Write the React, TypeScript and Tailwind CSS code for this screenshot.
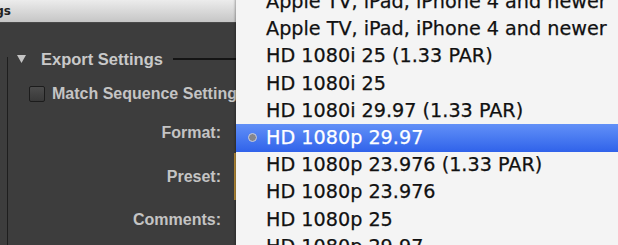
import React from "react";

const presets = [
    "Apple TV, iPad, iPhone 4 and newer",
    "Apple TV, iPad, iPhone 4 and newer",
    "HD 1080i 25 (1.33 PAR)",
    "HD 1080i 25",
    "HD 1080i 29.97 (1.33 PAR)",
    "HD 1080p 29.97",
    "HD 1080p 23.976 (1.33 PAR)",
    "HD 1080p 23.976",
    "HD 1080p 25",
    "HD 1080p 29.97",
];

const SELECTED = 5;

function TitleBar() {
    return (
        <div className="h-[23px] flex bg-gradient-to-b from-[#ececec] to-[#c6c6c6] border-b border-[#4a4a4a]">
            {/* window title, only the tail of it is on screen */}
            <div className="w-[11px] flex justify-end whitespace-nowrap font-['DejaVu_Sans',sans-serif] font-bold text-[12px] leading-[23px] text-[#222]">
                Export Settings
            </div>
        </div>
    );
}

function PresetMenu() {
    return (
        <div className="absolute left-[236px] top-[-12px] right-0 bg-[#f4f4f4] shadow-[-1px_0_2px_rgba(0,0,0,0.3)] font-['DejaVu_Sans','Lucida_Grande',sans-serif] text-[19.2px] [-webkit-text-stroke:0.25px]">
            {presets.map((p, i) => {
                const sel = i === SELECTED;
                return (
                    <div
                        key={i}
                        className={
                            sel
                                ? "relative h-[28px] -my-[0.4px] leading-[28px] pl-[30px] whitespace-nowrap text-white bg-gradient-to-b from-[#6290f7] to-[#3062ea]"
                                : "h-[27.2px] leading-[27.2px] pl-[30px] whitespace-nowrap text-[#111]"
                        }
                    >
                        {sel && (
                            <span className="absolute left-[12px] top-[9.5px] w-[9px] h-[9px] rounded-full bg-[#85868c] border border-[#c6cde6]" />
                        )}
                        {p}
                    </div>
                );
            })}
        </div>
    );
}

export default function App() {
    return (
        <div className="relative w-[618px] h-[245px] overflow-hidden bg-[#3d3d3d] font-['Liberation_Sans',Arial,sans-serif]">
            <TitleBar />

            <div className="flex mt-[26px]">
                {/* left guide line */}
                <div className="w-[7px]" />
                <div className="mt-[8px] w-px h-[200px] bg-[#1e1e1e]" />

                <div className="flex-1">
                    {/* section header */}
                    <div className="h-[20px] flex items-center">
                        <svg width="9" height="8" viewBox="0 0 9 8" className="ml-[9px]">
                            <path d="M0 0 L9 0 L4.5 8 Z" fill="#c4c4c4" />
                        </svg>
                        <span className="ml-[15px] font-bold text-[16.5px] text-[#c9c9c9] whitespace-nowrap">
                            Export Settings
                        </span>
                        <div className="ml-[10px] flex-1 h-[2px] bg-[#141414]" />
                    </div>

                    {/* match sequence */}
                    <div className="mt-[15px] h-[20px] flex items-center">
                        <div className="ml-[21px] w-[16px] h-[16px] rounded-[2px] border border-[#1c1c1c] bg-gradient-to-b from-[#4c4c4c] to-[#393939]" />
                        <span className="ml-[7px] font-bold text-[16px] text-[#c4c4c4] whitespace-nowrap">
                            Match Sequence Settings
                        </span>
                    </div>

                    {/* form rows */}
                    <div className="mt-[18px] flex flex-col gap-[21.5px]">
                        <div className="h-[22px] flex items-center">
                            <span className="w-[213px] text-right font-bold text-[16px] leading-[22px] text-[#c4c4c4]">Format:</span>
                        </div>
                        <div className="h-[22px] flex items-center">
                            <span className="w-[213px] text-right font-bold text-[16px] leading-[22px] text-[#c4c4c4]">Preset:</span>
                            <div className="ml-[13px] w-[4px] h-[47px] shrink-0 bg-[#b68c38]" />
                        </div>
                        <div className="h-[22px] flex items-center">
                            <span className="w-[213px] text-right font-bold text-[16px] leading-[22px] text-[#c4c4c4]">Comments:</span>
                        </div>
                    </div>
                </div>
            </div>

            <PresetMenu />
        </div>
    );
}
